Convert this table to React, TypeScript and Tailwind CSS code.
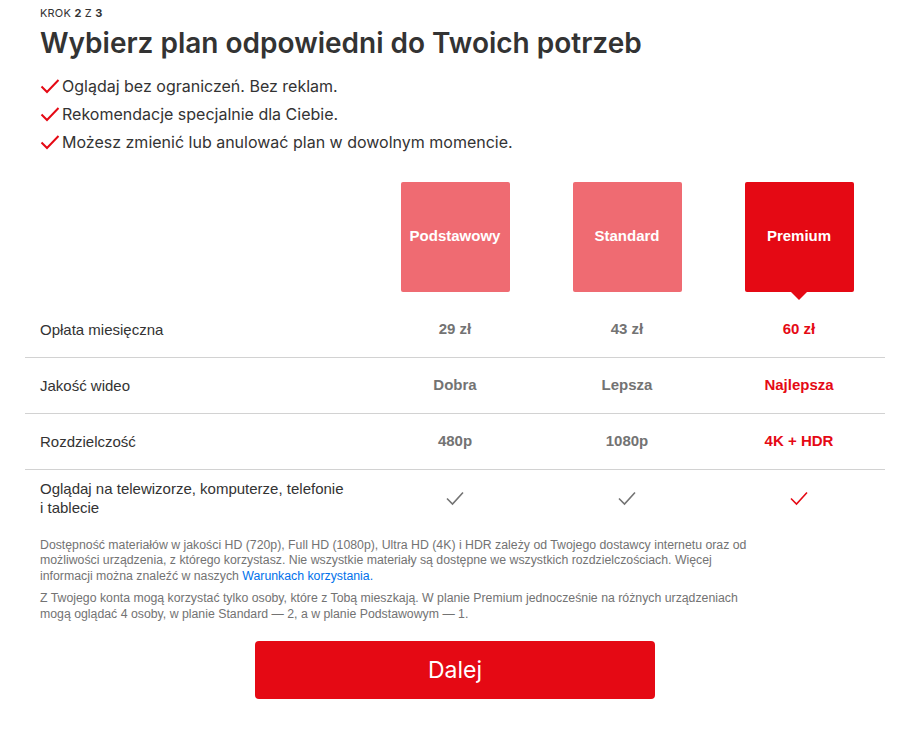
import React from 'react';

const plans = [
  { name: 'Podstawowy', price: '29 zł', quality: 'Dobra', res: '480p', active: false },
  { name: 'Standard', price: '43 zł', quality: 'Lepsza', res: '1080p', active: false },
  { name: 'Premium', price: '60 zł', quality: 'Najlepsza', res: '4K + HDR', active: true },
];

const perks = [
  'Oglądaj bez ograniczeń. Bez reklam.',
  'Rekomendacje specjalnie dla Ciebie.',
  'Możesz zmienić lub anulować plan w dowolnym momencie.',
];

const RedCheck = () => (
  <svg width="20" height="16" viewBox="0 0 20 16" className="shrink-0">
    <path d="M1.5 8.5 L7 14 L18.5 2" fill="none" stroke="#e50914" strokeWidth="2" />
  </svg>
);

const ThinCheck = ({ color }: { color: string }) => (
  <svg width="20" height="16" viewBox="0 0 20 16">
    <path d="M2 8.5 L7.5 14 L18 2.5" fill="none" stroke={color} strokeWidth="1.6" />
  </svg>
);

const Row = ({ label, values, last }: { label: React.ReactNode; values: React.ReactNode[]; last?: boolean }) => (
  <div className={`grid grid-cols-[344px_172px_172px_172px] items-center ${last ? 'h-[56px]' : 'h-[56px] border-b border-[#d2d2d2]'}`}>
    <div className="pl-[15px] text-[15px] leading-[19px] text-[#333]">{label}</div>
    {values.map((v, i) => (
      <div
        key={i}
        className={`flex justify-center text-[15px] font-bold ${i === 2 ? 'text-[#e50914]' : 'text-[#737373]'}`}
      >
        {v}
      </div>
    ))}
  </div>
);

export default function App() {
  return (
    <div className="w-[900px] h-[754px] bg-white font-['Liberation_Sans',sans-serif] text-[#333]">
      <div className="pl-[40px] pt-[5px]">
        <div className="text-[11px] tracking-[0.2px] text-[#333] font-['Inter',sans-serif]">
          KROK <b>2</b> Z <b>3</b>
        </div>
        <h1 className="mt-[4px] text-[28px] leading-[34px] font-semibold text-[#333] font-['Inter',sans-serif]">
          Wybierz plan odpowiedni do Twoich potrzeb
        </h1>
        <ul className="mt-[15px] flex flex-col gap-[6px] font-['Inter',sans-serif]">
          {perks.map((p) => (
            <li key={p} className="flex items-center gap-[2px] text-[16px] leading-[22px] text-[#333]">
              <RedCheck />
              <span>{p}</span>
            </li>
          ))}
        </ul>
      </div>

      <div className="ml-[25px] mt-[29px] w-[860px]">
        <div className="grid grid-cols-[344px_172px_172px_172px] h-[120px]">
          <div />
          {plans.map((p) => (
            <div key={p.name} className="flex justify-center">
              <div
                className={`relative w-[109px] h-[110px] rounded-[2px] flex items-center justify-center text-white text-[15px] font-bold ${
                  p.active ? 'bg-[#e50914]' : 'bg-[#ef6b72]'
                }`}
              >
                {p.name}
                {p.active && (
                  <div className="absolute left-1/2 -translate-x-1/2 top-full w-0 h-0 border-l-[8px] border-r-[8px] border-t-[8px] border-l-transparent border-r-transparent border-t-[#e50914]" />
                )}
              </div>
            </div>
          ))}
        </div>
        <Row label="Opłata miesięczna" values={plans.map((p) => p.price)} />
        <Row label="Jakość wideo" values={plans.map((p) => p.quality)} />
        <Row label="Rozdzielczość" values={plans.map((p) => p.res)} />
        <Row
          last
          label={
            <>
              Oglądaj na telewizorze, komputerze, telefonie
              <br />i tablecie
            </>
          }
          values={plans.map((p) => (
            <ThinCheck key={p.name} color={p.active ? '#e50914' : '#737373'} />
          ))}
        />
      </div>

      <div className="ml-[40px] w-[760px] mt-[12px] text-[12.3px] leading-[15.5px] text-[#737373]">
        <p>
          Dostępność materiałów w jakości HD (720p), Full HD (1080p), Ultra HD (4K) i HDR zależy od Twojego dostawcy
          internetu oraz od
          <br />
          możliwości urządzenia, z którego korzystasz. Nie wszystkie materiały są dostępne we wszystkich
          rozdzielczościach. Więcej
          <br />
          <span>informacji można znaleźć w naszych </span>
          <span className="text-[#0071eb]">Warunkach korzystania.</span>
        </p>
        <p className="mt-[7px]">
          Z Twojego konta mogą korzystać tylko osoby, które z Tobą mieszkają. W planie Premium jednocześnie na różnych
          urządzeniach
          <br />
          mogą oglądać 4 osoby, w planie Standard — 2, a w planie Podstawowym — 1.
        </p>
      </div>

      <div className="flex justify-center pl-[10px] mt-[19px]">
        <button className="w-[400px] h-[58px] rounded-[4px] bg-[#e50914] text-white text-[23px] font-['Inter',sans-serif]">
          Dalej
        </button>
      </div>
    </div>
  );
}
